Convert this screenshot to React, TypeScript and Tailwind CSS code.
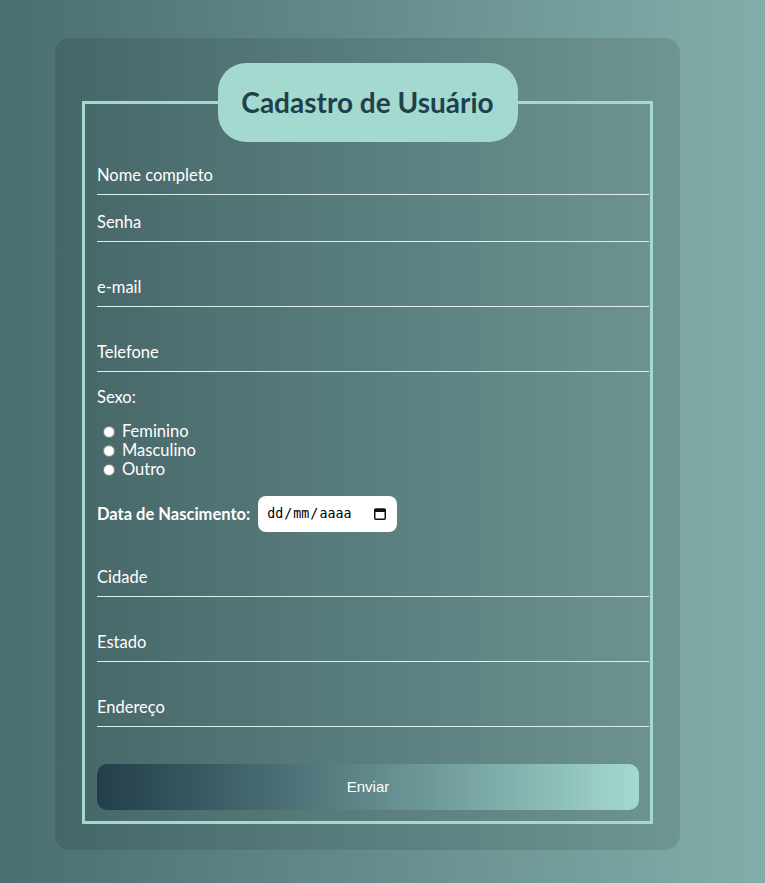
import React from "react";

const fieldInput =
  "block w-full h-9 pb-[3px] bg-transparent border-0 border-b border-[#dcefeb] px-0 text-[16.5px] text-white placeholder:text-white outline-none";

function CalendarIcon() {
  return (
    <svg width="12" height="12" viewBox="0 0 12 12" aria-hidden="true">
      <rect x="0.75" y="1" width="10.5" height="10.25" rx="1" fill="none" stroke="#111" strokeWidth="1.5" />
      <rect x="0.75" y="1" width="10.5" height="3" fill="#111" />
    </svg>
  );
}

export default function App() {
  const sexos = ["Feminino", "Masculino", "Outro"];

  return (
    <div
      className="min-h-screen w-full bg-gradient-to-r from-[#4b6e71] to-[#82aeaa] pt-[38px] pl-[55px]"
      style={{ fontFamily: "Lato, 'Open Sans', sans-serif" }}
    >
      <form className="w-[625px] rounded-[15px] bg-black/10 px-[27px] pt-[25px] pb-[26px]">
        <fieldset className="m-0 border-[3px] border-[#a3d9cf] p-0 pb-[11px]">
          <legend className="mx-auto w-[300px] rounded-[28px] bg-[#a3d9cf] py-[20px] text-center text-[28px] leading-[39px] font-bold text-[#21404c]">
            Cadastro de Usuário
          </legend>

          <div className="pl-3 pr-px">
            <input className={`${fieldInput} mt-[17px]`} placeholder="Nome completo" />
            <input className={`${fieldInput} mt-[11px]`} type="password" placeholder="Senha" />
            <input className={`${fieldInput} mt-[29px]`} type="email" placeholder="e-mail" />
            <input className={`${fieldInput} mt-[29px]`} type="tel" placeholder="Telefone" />

            <p className="mt-[13px] text-[16.5px] leading-6 text-white">Sexo:</p>
            <div className="mt-[13px] flex flex-col">
              {sexos.map((s) => (
                <label key={s} className="flex h-[19px] items-center text-[16.5px] text-white">
                  <input type="radio" name="sexo" className="ml-[6px] mr-[7px] h-[12px] w-[12px]" />
                  {s}
                </label>
              ))}
            </div>

            <div className="mt-[17px] flex items-center">
              <span className="mr-2 text-[16.5px] font-bold text-white">Data de Nascimento:</span>
              <div className="flex h-9 w-[139px] items-center justify-between rounded-lg bg-white pl-[8px] pr-[11px]">
                <span
                  className="flex text-[13.33px] text-black"
                  style={{ fontFamily: "'DejaVu Sans Mono', 'Liberation Mono', monospace" }}
                >
                  <span className="px-px">dd</span>/<span className="px-px">mm</span>/<span className="px-px">aaaa</span>
                </span>
                <CalendarIcon />
              </div>
            </div>

            <input className={`${fieldInput} mt-[29px]`} placeholder="Cidade" />
            <input className={`${fieldInput} mt-[29px]`} placeholder="Estado" />
            <input className={`${fieldInput} mt-[29px]`} placeholder="Endereço" />

            <button
              type="button"
              className="mt-[37px] block h-[46px] w-[calc(100%-10px)] rounded-[10px] bg-gradient-to-r from-[#233e4a] to-[#a3d9cf] text-[15px] text-white"
              style={{ fontFamily: "'Liberation Sans', Arial, sans-serif" }}
            >
              Enviar
            </button>
          </div>
        </fieldset>
      </form>
    </div>
  );
}
